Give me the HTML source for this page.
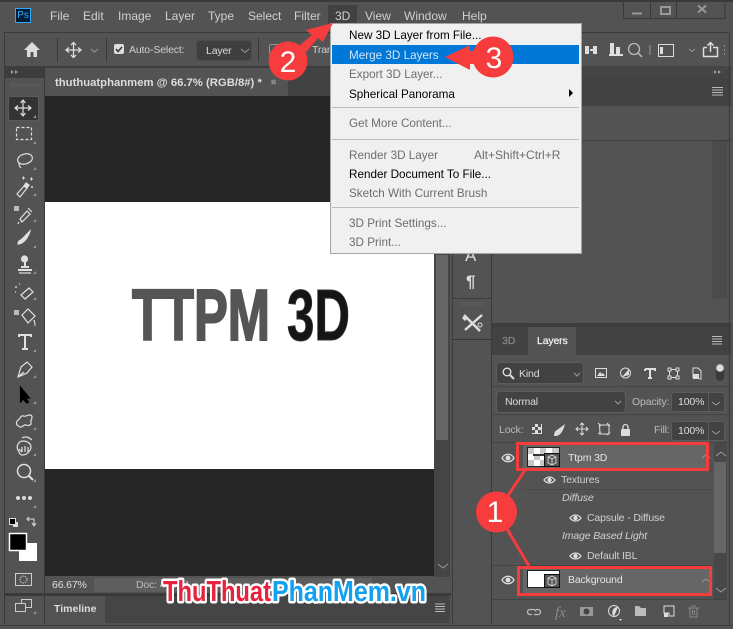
<!DOCTYPE html>
<html><head><meta charset="utf-8"><style>
html,body{margin:0;padding:0;background:#535353}
#p{position:relative;width:733px;height:629px;overflow:hidden;background:#535353;font-family:"Liberation Sans",sans-serif;font-size:12px;color:#d0d0d0}
#p div{position:absolute}
.t{white-space:nowrap;line-height:14px}
.s{font-size:10.5px;letter-spacing:-.15px}
.m{color:#000;font-size:11.7px}
.d{color:#6d6d6d;font-size:11.7px}
svg{position:absolute;left:0;top:0}
</style></head><body><div id="p">
<!-- bands -->
<div style="left:0;top:0;width:733px;height:2px;background:#3a3a3a"></div>
<div style="left:4px;top:32px;width:725px;height:1px;background:#3a3a3a"></div>
<div style="left:328px;top:5px;width:29px;height:19px;background:#414141"></div>
<div style="left:5px;top:66px;width:446px;height:30px;background:#3d3d3d"></div>
<div style="left:5px;top:78px;width:39px;height:18px;background:#535353"></div>
<div style="left:452px;top:66px;width:279px;height:12px;background:#454545"></div>
<div style="left:492px;top:78px;width:239px;height:28px;background:#424242"></div>
<div style="left:45px;top:68px;width:243px;height:28px;background:#535353"></div>
<div style="left:288px;top:68px;width:163px;height:28px;background:#424242"></div>
<!-- canvas -->
<div style="left:45px;top:96px;width:389px;height:480px;background:#262626"></div>
<div style="left:45px;top:202px;width:389px;height:267px;background:#fff"></div>
<div style="left:434px;top:96px;width:16px;height:481px;background:#454545"></div>
<div style="left:436px;top:255px;width:12px;height:185px;background:#666"></div>
<div style="left:45px;top:577px;width:405px;height:16px;background:#535353"></div>
<div style="left:94px;top:578px;width:278px;height:14px;background:#5e5e5e"></div>
<div style="left:5px;top:593px;width:446px;height:3px;background:#3a3a3a"></div>
<div style="left:45px;top:596px;width:405px;height:27px;background:#454545"></div>
<div style="left:45px;top:596px;width:60px;height:27px;background:#535353"></div>
<div style="left:0;top:625px;width:733px;height:1px;background:#3a3a3a"></div>
<!-- right panel -->
<div style="left:492px;top:140px;width:239px;height:1px;background:#3d3d3d"></div>
<div style="left:712px;top:141px;width:15px;height:158px;background:#4b4b4b"></div>
<div style="left:492px;top:323px;width:239px;height:4px;background:#3d3d3d"></div>
<div style="left:492px;top:327px;width:239px;height:28px;background:#424242"></div>
<div style="left:528px;top:327px;width:48px;height:28px;background:#535353"></div>
<div style="left:492px;top:386px;width:239px;height:1px;background:#444"></div>
<div style="left:492px;top:414px;width:239px;height:1px;background:#444"></div>
<div style="left:492px;top:442px;width:239px;height:1px;background:#444"></div>
<!-- controls -->
<div style="left:197px;top:41px;width:54px;height:19px;background:#3f3f3f;border-radius:3px;box-shadow:0 0 0 1px #4c4c4c"></div>
<div style="left:497px;top:363px;width:86px;height:20px;background:#424242;border-radius:3px;box-shadow:0 0 0 1px #5c5c5c"></div>
<div style="left:497px;top:392px;width:128px;height:20px;background:#424242;border-radius:3px;box-shadow:0 0 0 1px #5c5c5c"></div>
<div style="left:672px;top:393px;width:52px;height:18px;background:#424242;border-radius:2px;box-shadow:0 0 0 1px #5c5c5c"></div>
<div style="left:672px;top:422px;width:52px;height:18px;background:#424242;border-radius:2px;box-shadow:0 0 0 1px #5c5c5c"></div>
<div style="left:708px;top:393px;width:1px;height:18px;background:#5c5c5c"></div>
<div style="left:708px;top:422px;width:1px;height:18px;background:#5c5c5c"></div>
<!-- layers -->
<div style="left:523px;top:443px;width:186px;height:27px;background:#666"></div>
<div style="left:523px;top:566px;width:186px;height:29px;background:#666"></div>
<div style="left:523px;top:470px;width:190px;height:1px;background:#444"></div>
<div style="left:523px;top:489px;width:190px;height:1px;background:#484848"></div>
<div style="left:492px;top:565px;width:222px;height:1px;background:#444"></div>
<div style="left:492px;top:599px;width:235px;height:1px;background:#444"></div>
<div style="left:714px;top:443px;width:13px;height:156px;background:#484848"></div>
<div style="left:714px;top:462px;width:12px;height:91px;background:#666"></div>

<!-- menu text -->
<div class="t" style="left:50px;top:9px">File</div>
<div class="t" style="left:83px;top:9px">Edit</div>
<div class="t" style="left:118px;top:9px">Image</div>
<div class="t" style="left:165px;top:9px">Layer</div>
<div class="t" style="left:208px;top:9px">Type</div>
<div class="t" style="left:248px;top:9px">Select</div>
<div class="t" style="left:294px;top:9px">Filter</div>
<div class="t" style="left:335px;top:9px">3D</div>
<div class="t" style="left:365px;top:9px">View</div>
<div class="t" style="left:404px;top:9px">Window</div>
<div class="t" style="left:462px;top:9px">Help</div>
<div class="t" style="left:15px;top:8px;width:14px;height:13px;background:#001e36;border:1px solid #31a8ff;color:#31a8ff;font-size:10px;line-height:13px;text-align:center">Ps</div>
<div class="t s" style="left:129px;top:43px">Auto-Select:</div>
<div class="t s" style="left:206px;top:44px;color:#ddd">Layer</div>
<div class="t s" style="left:312px;top:43px">Tran</div>
<div class="t" style="left:55px;top:76px;font-weight:bold;font-size:11.3px;color:#ddd">thuthuatphanmem @ 66.7% (RGB/8#) *</div>
<div class="t s" style="left:52px;top:578px;color:#ddd">66.67%</div>
<div class="t s" style="left:136px;top:578px;color:#bbb">Doc: 4.2K/4</div>
<div class="t" style="left:54px;top:602px;font-size:10.5px;font-weight:bold;color:#ddd">Timeline</div>

<!-- panel text -->
<div class="t s" style="left:502px;top:334px;color:#8a8a8a;-webkit-text-stroke:.2px #8a8a8a">3D</div>
<div class="t s" style="left:537px;top:334px;color:#f0f0f0;-webkit-text-stroke:.25px #f0f0f0">Layers</div>
<div class="t s" style="left:519px;top:367px;color:#ddd">Kind</div>
<div class="t s" style="left:505px;top:395px;color:#ddd">Normal</div>
<div class="t s" style="left:632px;top:395px;color:#bbb">Opacity:</div>
<div class="t s" style="left:678px;top:395px;color:#ddd">100%</div>
<div class="t s" style="left:499px;top:423px;color:#bbb">Lock:</div>
<div class="t s" style="left:654px;top:423px;color:#bbb">Fill:</div>
<div class="t s" style="left:678px;top:424px;color:#ddd">100%</div>
<div class="t s" style="left:568px;top:451px;color:#e4e4e4">Ttpm 3D</div>
<div class="t s" style="left:561px;top:473px">Textures</div>
<div class="t s" style="left:562px;top:491px;font-style:italic">Diffuse</div>
<div class="t s" style="left:587px;top:511px">Capsule - Diffuse</div>
<div class="t s" style="left:562px;top:529px;font-style:italic">Image Based Light</div>
<div class="t s" style="left:587px;top:549px">Default IBL</div>
<div class="t s" style="left:568px;top:573px;color:#e4e4e4">Background</div>

<svg width="733" height="629" viewBox="0 0 733 629" fill="none">
<!-- frame lines -->
<g stroke="#3a3a3a" stroke-width="1">
<path d="M4.500 33V625M44.500 66V625M452.500 66V625M491.500 66V625M729.500 33V625M57.500 38V62M106.500 38V62M258.500 38V62"/>
<path d="M452 298.500H491M452 339.500H491M623.500 0V18.500H725V0M676.500 2V18M650.500 2V18"/>
</g>
<!-- toolbar icons -->
<path d="M24 50l8-8 8 8h-3v7h-3.500v-5h-3v5H27v-7z" fill="#ddd"/>
<g stroke="#ddd" stroke-width="1.300"><path d="M66 50H81M73.500 42.500V57.500"/><path d="M69 47.500L66 50L69 52.500M78 47.500L81 50L78 52.500M71 45L73.500 42.500L76 45M71 55L73.500 57.500L76 55"/></g>
<path d="M91 49l3.500 3 3.500-3M241 49l4 3.500 4-3.500M689 49l3 2.500 3-2.500" stroke="#999"/>
<rect x="114" y="44" width="10" height="10" rx="2" fill="#ddd"/><path d="M116 49l2 2.500 4-4.500" stroke="#333" stroke-width="1.500"/>
<rect x="269.500" y="44.500" width="10" height="10" rx="2" stroke="#999"/>
<g fill="#ddd"><rect x="585" y="46" width="4" height="8"/><rect x="590" y="49" width="3" height="2"/><rect x="593" y="46" width="4" height="8"/>
<rect x="610" y="43" width="4" height="11"/><rect x="616" y="47" width="4" height="7"/><rect x="609" y="54" width="14" height="2"/></g>
<circle cx="634" cy="49" r="5.500" stroke="#bbb" stroke-width="1.300"/><path d="M638 53l4 4" stroke="#bbb" stroke-width="1.500"/>
<path d="M650 45V55" stroke="#999"/>
<rect x="658.500" y="44.500" width="15" height="12" stroke="#ddd"/><rect x="660" y="47" width="3" height="7" fill="#ddd"/>
<path d="M703.500 47.500H707M713 47.500H717.500V56.500H703.500V47.500M710.500 52V43M707.500 45.500L710.500 42.500L713.500 45.500" stroke="#ddd" stroke-width="1.500"/>
<path d="M724 46h1M724 50h1M724 54h1" stroke="#888" stroke-width="2"/>
<!-- window -->
<path d="M632 13.500H642" stroke="#999" stroke-width="2"/><rect x="661" y="7" width="9" height="7" stroke="#999" stroke-width="2"/><path d="M698 5.500l8 7M706 5.500l-8 7" stroke="#999" stroke-width="2"/>
<!-- tab close, expanders -->
<path d="M271.500 80l4 4M275.500 80l-4 4" stroke="#888" stroke-width="2"/>
<path d="M11 70l3 2-3 2zM15 70l3 2-3 2zM714 70l3 2-3 2zM718 70l3 2-3 2z" fill="#999"/>
<path d="M712 87.500h11M712 90h11M712 92.500h11M712 95h11M712 336.500h10M712 339h10M712 341.500h10M712 344h10M435 604h10M435 606.500h10M435 609h10M435 611.500h10" stroke="#bbb" stroke-width="1"/>
<path d="M10 84h30M10 86h30" stroke="#5c5c5c"/>
<path d="M460 303h24M460 305h24" stroke="#5c5c5c"/>
<path d="M438 564l5 4 5-4M716 588l5 4 5-4M716 456l5-4 5 4M702 458l4-3 4 3M702 582l4-3 4 3M712 402l4 3 4-3M712 431l4 3 4-3M574 373l3 3 3-3M615 401l3 3 3-3" stroke="#999"/>
<!-- left tools -->
<rect x="8.500" y="96.500" width="30" height="24" rx="2" fill="#333" stroke="#5a5a5a"/>
<g stroke="#e0e0e0" stroke-width="1.200">
<path d="M15 108H31M23 100V116M18 105.500L15 108L18 110.500M28 105.500L31 108L28 110.500M20.500 103L23 100L25.500 103M20.500 113L23 116L25.500 113"/>
<rect x="16.500" y="127.500" width="15" height="12" stroke-dasharray="3 2"/>
<ellipse cx="25" cy="159" rx="7.500" ry="5" transform="rotate(-15 25 159)"/><path d="M19 162c0 3 0 4 2 6"/>
<path d="M17 194l7-8 3 2-7 9z"/><path d="M24 186l2-3 3 2-2 3z" fill="#e0e0e0"/><path d="M22 178h3M23.500 176.500v3M30 179h3M31.500 177.500v3M31 187h2M32 186v2" stroke-width="1"/>
<path d="M20 219l7-8 3 3-8 8zM28 208l4 4M19 222l-1 2"/>
<path d="M18 244c0-3 2-4 3-4l9-9c-1 4-4 9-7 11-2 2-4 2-5 2z" fill="#e0e0e0"/>
<path d="M18 270h14" stroke-width="2"/><path d="M19 273h12"/><path d="M25 260v6M21 267h8" stroke-width="2"/><circle cx="24.500" cy="259" r="3" fill="#e0e0e0"/>
<path d="M21 295l8-7 4 4-8 7zM15 287h2M19 284h1M15 292h1"/>
<path d="M22 315l6-6 7 7-7 7zM34 320l1 4"/>
<path d="M19 337V335H31V337M25 335V349M22 349H28" stroke-width="2"/>
<path d="M18 377l3-10 6-5 5 5-5 6zM18 377l6-5"/>
<path d="M20.500 387v15l3-3 3 4 2-1-3-4 4 0z" fill="#000" stroke="#000"/>
<path d="M17 425c-2-4 2-5 3-7 2-4 4-1 6-2s6-2 6 1-2 4-1 6-3 3-5 2-4 3-6 2-2-2-3-2z"/>
<path d="M18 450c-2-3 0-9 5-9s8 3 8 6-4 8-8 8-3-2-5-5zM22 447v5M25 446v6M28 447v5M19 449l3 3"/>
<path d="M22 438c3-2 7-1 10 2"/>
<circle cx="24" cy="471" r="6.500" stroke-width="1.500"/><path d="M29 476l4 4" stroke-width="2"/>
</g>
<rect x="14" y="206" width="5" height="5" fill="#bbb"/><rect x="14" y="310" width="5" height="5" fill="#bbb"/>
<circle cx="18" cy="498" r="2" fill="#ddd"/><circle cx="24" cy="498" r="2" fill="#ddd"/><circle cx="30" cy="498" r="2" fill="#ddd"/>
<g fill="#999"><path d="M36 115l-3 3h3zM36 141l-3 3h3zM36 167l-3 3h3zM36 193l-3 3h3zM36 219l-3 3h3zM36 245l-3 3h3zM36 271l-3 3h3zM36 297l-3 3h3zM36 323l-3 3h3zM36 349l-3 3h3zM36 375l-3 3h3zM36 401l-3 3h3zM36 427l-3 3h3zM36 453l-3 3h3zM36 479l-3 3h3zM36 505l-3 3h3zM36 611l-3 3h3z"/></g>
<rect x="13" y="522" width="5" height="5" fill="#ddd"/><rect x="9.500" y="518.500" width="6" height="6" fill="#000" stroke="#ddd"/>
<path d="M28 519h6v6M32 523l2 3 2-3M29 517l-2 2 2 2" stroke="#ddd"/>
<rect x="18.500" y="542.500" width="19" height="19" fill="#fff" stroke="#555"/>
<rect x="9.500" y="533.500" width="17" height="17" fill="#000" stroke="#fff" stroke-width="1.500"/>
<rect x="15.500" y="573.500" width="16" height="12" stroke="#ccc"/><circle cx="23.500" cy="579.500" r="3.500" stroke="#ccc" stroke-dasharray="1.500 1"/>
<rect x="21.500" y="599.500" width="10" height="8" stroke="#ccc"/><rect x="15.500" y="603.500" width="10" height="8" fill="#535353" stroke="#ccc"/>
<!-- 3D text on canvas -->
<text x="132" y="340" font-family="Liberation Sans" font-weight="bold" font-size="72" fill="#555" stroke="#555" stroke-width="2" textLength="138" lengthAdjust="spacingAndGlyphs">TTPM</text>
<text x="287" y="340" font-family="Liberation Sans" font-weight="bold" font-size="72" fill="#151515" stroke="#333" stroke-width="1" textLength="63" lengthAdjust="spacingAndGlyphs">3D</text>
<!-- mid strip -->
<text x="465" y="261" font-family="Liberation Sans" font-size="17" fill="#ddd">A</text>
<text x="466" y="287" font-family="Liberation Sans" font-size="17" font-weight="bold" fill="#ddd">¶</text>
<path d="M464 315l7 7 9 9M482 315l-17 15" stroke="#ddd" stroke-width="2.500"/><circle cx="480" cy="325" r="2" stroke="#ddd"/><path d="M463 317l3 3" stroke="#ddd" stroke-width="3"/>
<!-- panel icons -->
<circle cx="507" cy="372" r="3.800" stroke="#ddd" stroke-width="1.400"/><path d="M510 375l4 4" stroke="#ddd" stroke-width="2"/>
<rect x="595.500" y="368.500" width="11" height="9" stroke="#ddd"/><path d="M597 376l3-4 2 2 1-1 2 3z" fill="#ddd"/>
<circle cx="625.500" cy="373" r="5" stroke="#ddd"/><path d="M622 377l7-8v6z" fill="#ddd"/>
<path d="M645 369h10v2M650 369v9M648 378h4M645 371v-2" stroke="#ddd" stroke-width="2"/>
<path d="M669.500 369.500h8v8h-8z" stroke="#ddd"/><path d="M668 368h3v3h-3zM676 368h3v3h-3zM668 376h3v3h-3zM676 376h3v3h-3z" fill="#535353" stroke="#ddd"/>
<path d="M693 378v-10h5l3 3v8h-2" stroke="#ddd"/><rect x="693" y="374" width="6" height="5" fill="#ddd"/>
<rect x="716" y="365" width="8" height="16" rx="4" fill="#3a3a3a"/><circle cx="720" cy="368" r="3.800" fill="#ddd"/>
<!-- lock row -->
<rect x="532" y="424" width="10" height="10" fill="#ddd"/><path d="M532 424h3v3h-3zM538 424h3v3h-3zM535 427h3v3h-3zM532 430h3v3h-3zM538 430h3v3h-3z" fill="#555"/>
<path d="M554 436c0-3 1-5 3-6l8-6c-1 4-3 9-6 11-2 1-3 1-5 1z" fill="#ddd"/>
<path d="M576 429H588M582 423V435M578 427l-2 2 2 2M586 427l2 2-2 2M580 425l2-2 2 2M580 433l2 2 2-2" stroke="#ddd"/>
<path d="M599.500 425H609V434H600zM598 423l3 3M607 423l3 3M598 434l3-2M607 435l3-3" stroke="#ddd"/>
<rect x="621" y="429" width="9" height="7" rx="1" fill="#ddd"/><path d="M623 429v-2a2.500 2.500 0 0 1 5 0v2" stroke="#ddd" stroke-width="1.300"/>
<!-- thumbnails -->
<rect x="527.500" y="447.500" width="32" height="19" fill="#fff" stroke="#222"/>
<path d="M528 448h6v6h-6zM540 448h6v6h-6zM552 448h7v6h-7zM534 454h6v6h-6zM528 460h6v6h-6zM540 460h4v6h-4z" fill="#c8c8c8"/>
<path d="M533 454h11v2h-11z" fill="#333"/>
<rect x="544.500" y="453.500" width="15" height="13" fill="#555" stroke="#111"/>
<path d="M548 457l4-2 4 2v6l-4 2-4-2zM548 457l4 2 4-2M552 459v6" stroke="#ccc"/>
<rect x="527.500" y="570.500" width="32" height="17" fill="#fff" stroke="#222"/>
<rect x="544.500" y="574.500" width="15" height="13" fill="#555" stroke="#111"/>
<path d="M548 578l4-2 4 2v6l-4 2-4-2zM548 578l4 2 4-2M552 580v6" stroke="#ccc"/>
<!-- eyes -->
<g stroke="#ddd" fill="none" stroke-width="1.300">
<path d="M502 458c3-5 9-5 12 0-3 5-9 5-12 0zM502 580c3-5 9-5 12 0-3 5-9 5-12 0z"/>
<path d="M544 480c3-4 8-4 11 0-3 4-8 4-11 0zM570 518c3-4 8-4 11 0-3 4-8 4-11 0zM570 556c3-4 8-4 11 0-3 4-8 4-11 0z"/>
</g>
<g fill="#ddd"><circle cx="508" cy="458" r="2.500"/><circle cx="508" cy="580" r="2.500"/><circle cx="549.500" cy="480" r="2.200"/><circle cx="575.500" cy="518" r="2.200"/><circle cx="575.500" cy="556" r="2.200"/></g>
<!-- bottom icons -->
<path d="M532 614.500h-2a2.500 2.500 0 0 1 0-5h4a2.500 2.500 0 0 1 2 2M534 614.500h4a2.500 2.500 0 0 0 0-5h-2" stroke="#bbb" stroke-width="1.300"/>
<text x="555" y="617" font-family="Liberation Serif" font-style="italic" font-size="15" fill="#8a8a8a">fx</text>
<rect x="580" y="607" width="13" height="9" fill="#999"/><circle cx="586.500" cy="611.500" r="3" fill="#444"/>
<circle cx="614" cy="611" r="5.500" stroke="#ddd"/><path d="M614 616.500a5.500 5.500 0 0 1 4-9.500z" fill="#ddd"/><path d="M619 619h3l-1.500 2z" fill="#ddd"/>
<path d="M635 606h4l2 2h5v8h-11z" fill="#bbb"/>
<path d="M664 606h10v10h-5v-3h-5z" stroke="#ddd"/><rect x="664" y="613" width="4" height="4" fill="#ddd"/>
<path d="M688 608h11M690 608v9h7v-9M691 606h5M692.500 610v5M694.500 610v5" stroke="#888"/>
<!-- menu -->
<rect x="330.500" y="23.500" width="251" height="230" fill="#f0f0f0" stroke="#a5a5a5"/>
<rect x="332" y="45" width="247" height="19" fill="#0078d7"/>
<path d="M332 107.500H579M332 139.500H579M332 207.500H579" stroke="#bdbdbd"/>
<path d="M569 89l4 4-4 4z" fill="#000"/>
</svg>

<div class="t m" style="left:349px;top:29px">New 3D Layer from File...</div>
<div class="t" style="left:349px;top:49px;color:#d3e6f6;font-size:11.7px">Merge 3D Layers</div>
<div class="t d" style="left:349px;top:68px">Export 3D Layer...</div>
<div class="t m" style="left:349px;top:88px">Spherical Panorama</div>
<div class="t d" style="left:349px;top:117px">Get More Content...</div>
<div class="t d" style="left:349px;top:149px">Render 3D Layer</div>
<div class="t d" style="left:474px;top:148px;font-size:12px">Alt+Shift+Ctrl+R</div>
<div class="t m" style="left:349px;top:168px">Render Document To File...</div>
<div class="t d" style="left:349px;top:187px">Sketch With Current Brush</div>
<div class="t d" style="left:349px;top:217px">3D Print Settings...</div>
<div class="t d" style="left:349px;top:236px">3D Print...</div>

<svg width="733" height="629" viewBox="0 0 733 629" fill="none">
<!-- annotations -->
<g stroke="#f63c3c" stroke-width="3" fill="none">
<rect x="517.500" y="443.500" width="190" height="26"/>
<rect x="518.500" y="567.500" width="192" height="27"/>
<path d="M525 470L497 512L529 566"/>
</g>
<g fill="#f63c3c">
<path d="M294 50L312 35L306 30L333 23L323 42L318 38L301 58z"/>
<circle cx="288" cy="61" r="19.500"/>
<path d="M445 57L470 45V51H480V64H470V70z"/>
<circle cx="493" cy="57" r="20.500"/>
<circle cx="496.500" cy="512" r="20.500"/>
</g>
<g font-family="Liberation Sans" font-size="30" fill="#fff" text-anchor="middle">
<text x="288" y="72">2</text>
<text x="494" y="68">3</text>
<text x="495" y="522">1</text>
</g>
<!-- watermark -->
<g font-family="Liberation Sans" font-weight="bold" font-size="29" paint-order="stroke" stroke-linejoin="round">
<text x="163" y="601" textLength="108" lengthAdjust="spacingAndGlyphs" fill="#e8213f" stroke="#fff" stroke-width="5">ThuThuat</text>
<text x="272" y="601" textLength="154" lengthAdjust="spacingAndGlyphs" fill="#12a0f0" stroke="#fff" stroke-width="5">PhanMem.vn</text>
</g>
</svg>
</div></body></html>
